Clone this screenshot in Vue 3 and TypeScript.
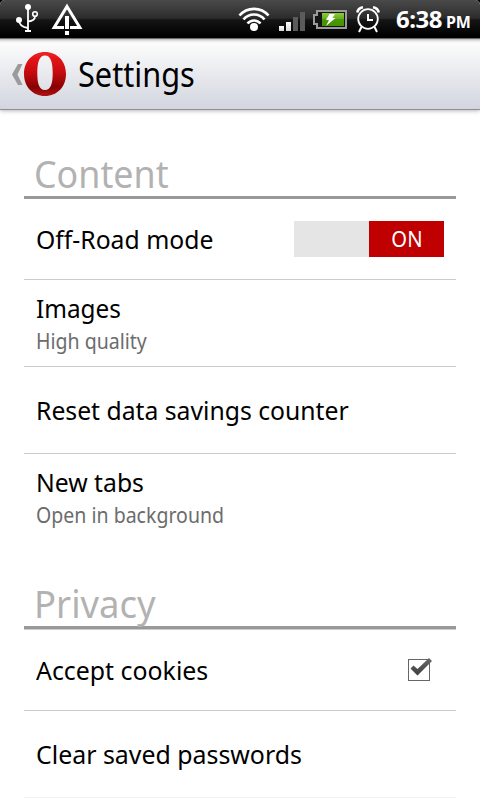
<script setup lang="ts">
import { ref } from 'vue'

interface Item {
  id: string
  title: string
  detail?: string
  control?: 'switch' | 'checkbox'
}

interface Section {
  id: string
  title: string
  items: Item[]
}

const sections: Section[] = [
  {
    id: 'content',
    title: 'Content',
    items: [
      { id: 'offroad', title: 'Off-Road mode', control: 'switch' },
      { id: 'images', title: 'Images', detail: 'High quality' },
      { id: 'reset', title: 'Reset data savings counter' },
      { id: 'tabs', title: 'New tabs', detail: 'Open in background' },
    ],
  },
  {
    id: 'privacy',
    title: 'Privacy',
    items: [
      { id: 'cookies', title: 'Accept cookies', control: 'checkbox' },
      { id: 'passwords', title: 'Clear saved passwords' },
    ],
  },
]

const enabled = ref<Record<string, boolean>>({ offroad: true, cookies: true })

function toggle(item: Item) {
  if (item.control) enabled.value[item.id] = !enabled.value[item.id]
}
</script>

<template>
  <div class="screen">
    <div class="status">
      <svg class="status-icons" width="480" height="38" viewBox="0 0 480 38">
        <defs>
          <linearGradient id="cell" x1="0" y1="0" x2="0" y2="1">
            <stop offset="0" stop-color="#8ccb3c" />
            <stop offset="0.48" stop-color="#64ad1a" />
            <stop offset="0.5" stop-color="#4a9a0a" />
            <stop offset="1" stop-color="#459000" />
          </linearGradient>
          <linearGradient id="bars" x1="0" y1="0" x2="0" y2="1">
            <stop offset="0" stop-color="#fff" />
            <stop offset="1" stop-color="#d8d8d8" />
          </linearGradient>
        </defs>
        <!-- usb -->
        <g fill="none" stroke="#fff" stroke-width="1.8">
          <path d="M28 8V31" />
          <path d="M19 20C19 25 22 27 28 28" />
          <path d="M28 21.500C32 21 35 20 35 16.500" />
          <circle cx="35" cy="14" r="2.300" stroke-width="1.6" />
        </g>
        <circle cx="28" cy="7" r="3" fill="#fff" />
        <circle cx="19" cy="20" r="3" fill="#fff" />
        <rect x="25" y="30" width="6" height="2" fill="#fff" />
        <!-- debugging alert -->
        <path d="M67 6.500L79.800 27.500H54.200Z" fill="none" stroke="#fff" stroke-width="3" />
        <rect x="64" y="25" width="6" height="10" fill="#090909" />
        <rect x="65" y="16" width="4" height="13" fill="#fff" />
        <rect x="65" y="31" width="4" height="4" fill="#fff" />
        <!-- wifi -->
        <g fill="none" stroke="#fff" stroke-width="2.700">
          <path d="M239.500 15.500A19 19 0 0 1 268.500 15.500" />
          <path d="M243.500 19.500A13.500 13.500 0 0 1 264.500 19.500" />
          <path d="M247.500 23.500A8.500 8.500 0 0 1 260.500 23.500" />
        </g>
        <circle cx="254" cy="27" r="4" fill="#fff" />
        <!-- signal -->
        <rect x="279" y="26" width="5" height="5" fill="url(#bars)" />
        <rect x="286" y="22" width="5" height="9" fill="url(#bars)" />
        <rect x="293" y="17" width="5" height="14" fill="#5b5b5b" />
        <rect x="300" y="12" width="5" height="19" fill="#5b5b5b" />
        <!-- battery -->
        <path d="M317 11H346V28H317V24H314V15H317Z" fill="#151515" stroke="#9b9b9b" stroke-width="2" />
        <rect x="322" y="13" width="22" height="13" fill="url(#cell)" />
        <path d="M329.500 14H335L332.500 18H335.500L326 26L329 20H326Z" fill="#fff" />
        <!-- alarm -->
        <g fill="none" stroke="#fff">
          <circle cx="368" cy="19" r="9.800" stroke-width="1.800" />
          <path d="M368 14V20H373" stroke-width="2" />
          <path d="M361.500 27L359 32M374.500 27L377 32" stroke-width="2" />
          <path d="M357.300 12.500Q358 8 363 7.200M378.700 12.500Q378 8 373 7.200" stroke-width="2.600" />
        </g>
      </svg>
      <div class="clock"><span class="time">6:38</span><span class="pm">PM</span></div>
    </div>

    <header class="bar">
      <svg class="logo" width="56" height="46" viewBox="0 0 56 46">
        <defs>
          <linearGradient id="red" x1="0" y1="0" x2="0" y2="1">
            <stop offset="0" stop-color="#e8262a" />
            <stop offset="0.15" stop-color="#e41418" />
            <stop offset="0.5" stop-color="#c00a0e" />
            <stop offset="0.8" stop-color="#870002" />
            <stop offset="1" stop-color="#b01414" />
          </linearGradient>
        </defs>
        <path d="M18 13H22.500L17.500 23.500L22.500 34H18L12 23.500Z" fill="#9b9b9b" />
        <path
          d="M45 1C57.500 1 66 10.500 66 23S57.500 45 45 45S24 35.500 24 23S32.500 1 45 1ZM45 4.500C39 4.500 37.300 12 37.300 22S39 39 45 39S52.700 32 52.700 22S51 4.500 45 4.500Z"
          fill="url(#red)" fill-rule="evenodd"
        />
      </svg>
      <h1>Settings</h1>
    </header>

    <main>
      <section v-for="s in sections" :key="s.id" :class="s.id">
        <h2><span>{{ s.title }}</span></h2>
        <div v-for="item in s.items" :key="item.id" class="row" :class="item.id" @click="toggle(item)">
          <div class="label">
            <div class="title">{{ item.title }}</div>
            <div v-if="item.detail" class="detail">{{ item.detail }}</div>
          </div>
          <div v-if="item.control === 'switch'" class="switch" :class="{ on: enabled[item.id] }">
            <div class="thumb"><span>{{ enabled[item.id] ? 'ON' : 'OFF' }}</span></div>
          </div>
          <svg v-if="item.control === 'checkbox'" class="check" width="26" height="26" viewBox="0 0 26 26">
            <defs>
              <linearGradient id="tick" x1="0" y1="0" x2="0" y2="1">
                <stop offset="0" stop-color="#6a6a6a" />
                <stop offset="1" stop-color="#3e3e3e" />
              </linearGradient>
            </defs>
            <rect x="0.500" y="3.500" width="21" height="21" fill="#fff" stroke="#666" />
            <path v-if="enabled[item.id]" d="M2.500 12.500L5.500 9.500L9.500 13L21 2L24 5L9.500 19.500Z" fill="url(#tick)" />
          </svg>
        </div>
      </section>
    </main>
  </div>
</template>

<style>
body {
  margin: 0;
  overflow: hidden;
  background: #fff;
}
</style>

<style scoped>
.screen {
  width: 480px;
  height: 800px;
  overflow: hidden;
  background: #fff;
  color: #000;
  font-family: 'Noto Sans', sans-serif;
}

.status {
  position: relative;
  display: flex;
  justify-content: flex-end;
  height: 38px;
  border-radius: 5px 5px 0 0;
  background: linear-gradient(#4a4a4a 0, #2c2c2c 18px, #151515 20px, #000 36px);
  box-shadow: 0 -6px 0 6px #000;
  clip-path: inset(0);
}

.status-icons {
  position: absolute;
  inset: 0;
}

.clock {
  display: flex;
  align-items: baseline;
  width: 84px;
  color: #fff;
  font-weight: 700;
  line-height: 38px;
  white-space: nowrap;
}

.time {
  width: 50px;
  font-size: 24px;
  letter-spacing: -0.5px;
}

.pm {
  font-size: 16px;
  letter-spacing: -0.2px;
}

.bar {
  display: flex;
  align-items: center;
  height: 72px;
  box-sizing: border-box;
  border-top: 1px solid #6e6a6a;
  border-bottom: 1px solid #8d8d92;
  background: linear-gradient(#bbb 0, #e8e8e8 2px, #fcfcfc 4px, #d2d5df);
  box-shadow: 0 1px 4px rgba(0, 0, 0, 0.28);
}

.logo {
  overflow: visible;
}

h1 {
  margin: 0 0 0 22px;
  font-size: 34px;
  font-weight: 400;
  line-height: 70px;
  transform: scaleX(0.903);
  transform-origin: left;
}

main {
  padding: 36px 24px 0;
}

h2 {
  box-sizing: border-box;
  height: 53px;
  margin: 0;
  padding-left: 10px;
  border-bottom: 3px solid #999;
  color: #b2b2b2;
  font-size: 38px;
  font-weight: 400;
  line-height: 54px;
}

h2 span {
  display: inline-block;
  transform: scaleX(0.942);
  transform-origin: left;
}

.row {
  display: flex;
  align-items: center;
  justify-content: space-between;
  box-sizing: border-box;
  height: 87px;
  padding: 0 12px;
  border-bottom: 1px solid #ccc;
}

.row.offroad {
  height: 81px;
}

.row.cookies {
  height: 82px;
}

.row.tabs {
  border-bottom-color: transparent;
}

.row.passwords {
  border-bottom-color: #f2f2f2;
}

.privacy {
  padding-top: 35px;
}

.privacy h2 {
  box-shadow: 0 1px #ccc;
}

.privacy h2 span {
  transform: scaleX(0.96);
}

.title {
  font-size: 26px;
  line-height: 34px;
  white-space: nowrap;
  transform: scaleX(0.951);
  transform-origin: left;
}

.cookies .title,
.passwords .title {
  transform: scaleX(0.957);
}

.images .title {
  transform: scaleX(0.935);
}

.detail {
  color: #6c6c6c;
  font-size: 22px;
  line-height: 30px;
  white-space: nowrap;
  transform: scaleX(0.888);
  transform-origin: left;
}

.switch {
  display: flex;
  width: 150px;
  height: 36px;
  background: #e5e5e5;
  color: #fff;
  font-size: 22px;
  line-height: 35px;
}

.thumb {
  width: 75px;
  background: #999;
  text-align: center;
}

.thumb span {
  display: inline-block;
  transform: scaleX(0.92);
}

.switch.on {
  justify-content: flex-end;
}

.switch.on .thumb {
  background: #c00000;
}

.check {
  margin: 0 10px 2px 0;
}
</style>
